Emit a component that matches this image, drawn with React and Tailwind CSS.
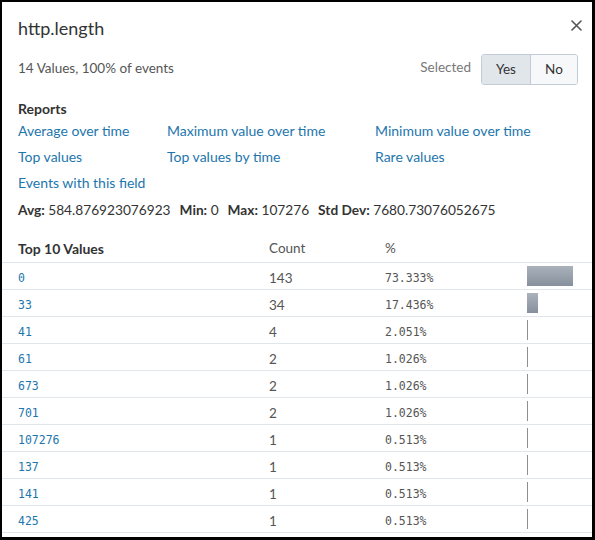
const links = [
  ['Average over time', 'Maximum value over time', 'Minimum value over time'],
  ['Top values', 'Top values by time', 'Rare values'],
  ['Events with this field', '', ''],
];

const rows = [
  { value: '0', count: 143, pct: '73.333%' },
  { value: '33', count: 34, pct: '17.436%' },
  { value: '41', count: 4, pct: '2.051%' },
  { value: '61', count: 2, pct: '1.026%' },
  { value: '673', count: 2, pct: '1.026%' },
  { value: '701', count: 2, pct: '1.026%' },
  { value: '107276', count: 1, pct: '0.513%' },
  { value: '137', count: 1, pct: '0.513%' },
  { value: '141', count: 1, pct: '0.513%' },
  { value: '425', count: 1, pct: '0.513%' },
];

const sans = "font-['Lato','Open_Sans',sans-serif]";
const mono = "font-['DejaVu_Sans_Mono',monospace]";

const App = () => {
  return (
    <div className={`w-[595px] h-[540px] bg-white border-l-2 border-t-2 border-r-[3px] border-b-[3px] border-black overflow-hidden ${sans} text-[#333]`}>
      {/* Header */}
      <div className="flex items-start justify-between pl-4 pr-[10px] pt-4">
        <h1 className="text-[18px] leading-[20px] font-normal">http.length</h1>
        <svg className="mt-[2px]" width="11" height="11" viewBox="0 0 11 11">
          <path d="M1 1 L10 10 M10 1 L1 10" stroke="#555" strokeWidth="1.6" strokeLinecap="round" />
        </svg>
      </div>

      <div className="flex items-center justify-between pl-4 pr-[14px] mt-4 h-[31px]">
        <span className="text-[13.5px] text-[#555] -mt-[2px]">14 Values, 100% of events</span>
        <div className="flex items-center">
          <span className="text-[13.5px] text-[#777] mr-[10px] -mt-[4px]">Selected</span>
          <div className="flex h-[31px] border border-[#c3cbd4] rounded-[3px] overflow-hidden text-[13.5px]">
            <button className="w-[49px] bg-[#e1e6eb] border-r border-[#c3cbd4]">Yes</button>
            <button className="w-[46px] bg-[#f7f8fa]">No</button>
          </div>
        </div>
      </div>

      {/* Reports */}
      <div className="pl-4 mt-[15px]">
        <div className="text-[14px] leading-[18px] font-bold">Reports</div>
        <div className="grid grid-cols-[149px_208px_1fr]">
          {links.flat().map((l, i) => (
            <a key={i} className="text-[14px] leading-[26px] text-[#1d76ad] whitespace-nowrap">{l}</a>
          ))}
        </div>
        <div className="mt-[1px] text-[13.7px] leading-[26px] whitespace-nowrap">
          <b>Avg:</b> 584.876923076923<span className="inline-block w-[9px]" />
          <b>Min:</b> 0<span className="inline-block w-[9px]" />
          <b>Max:</b> 107276<span className="inline-block w-[9px]" />
          <b>Std Dev:</b> 7680.73076052675
        </div>
      </div>

      {/* Table */}
      <div className="mt-[12px]">
        <div className="grid grid-cols-[251px_116px_142px_1fr] pl-4 h-[28px] items-center border-b border-[#e1e6eb] text-[13.5px]">
          <span className="font-bold text-[14px]">Top 10 Values</span>
          <span className="text-[#555]">Count</span>
          <span className="text-[#555]">%</span>
          <span />
        </div>
        {rows.map((r) => {
          const w = Math.max(1, Math.round((parseFloat(r.pct) / 73.333) * 46));
          return (
            <div key={r.value} className="grid grid-cols-[251px_116px_142px_1fr] pl-4 h-[27px] items-center border-b border-[#e1e6eb]">
              <span className={`${mono} text-[11.5px] text-[#1d76ad] translate-y-[3px]`}>{r.value}</span>
              <span className="text-[13.5px] text-[#555] translate-y-[2px]">{r.count}</span>
              <span className={`${mono} text-[11.5px] text-[#555] translate-y-[3px]`}>{r.pct}</span>
              <div
                className={`h-[20px] ${w > 1 ? 'bg-gradient-to-b from-[#aab2bc] to-[#86909c]' : 'bg-[#8a8f96]'}`}
                style={{ width: w }}
              />
            </div>
          );
        })}
      </div>
    </div>
  );
};

export default App;
